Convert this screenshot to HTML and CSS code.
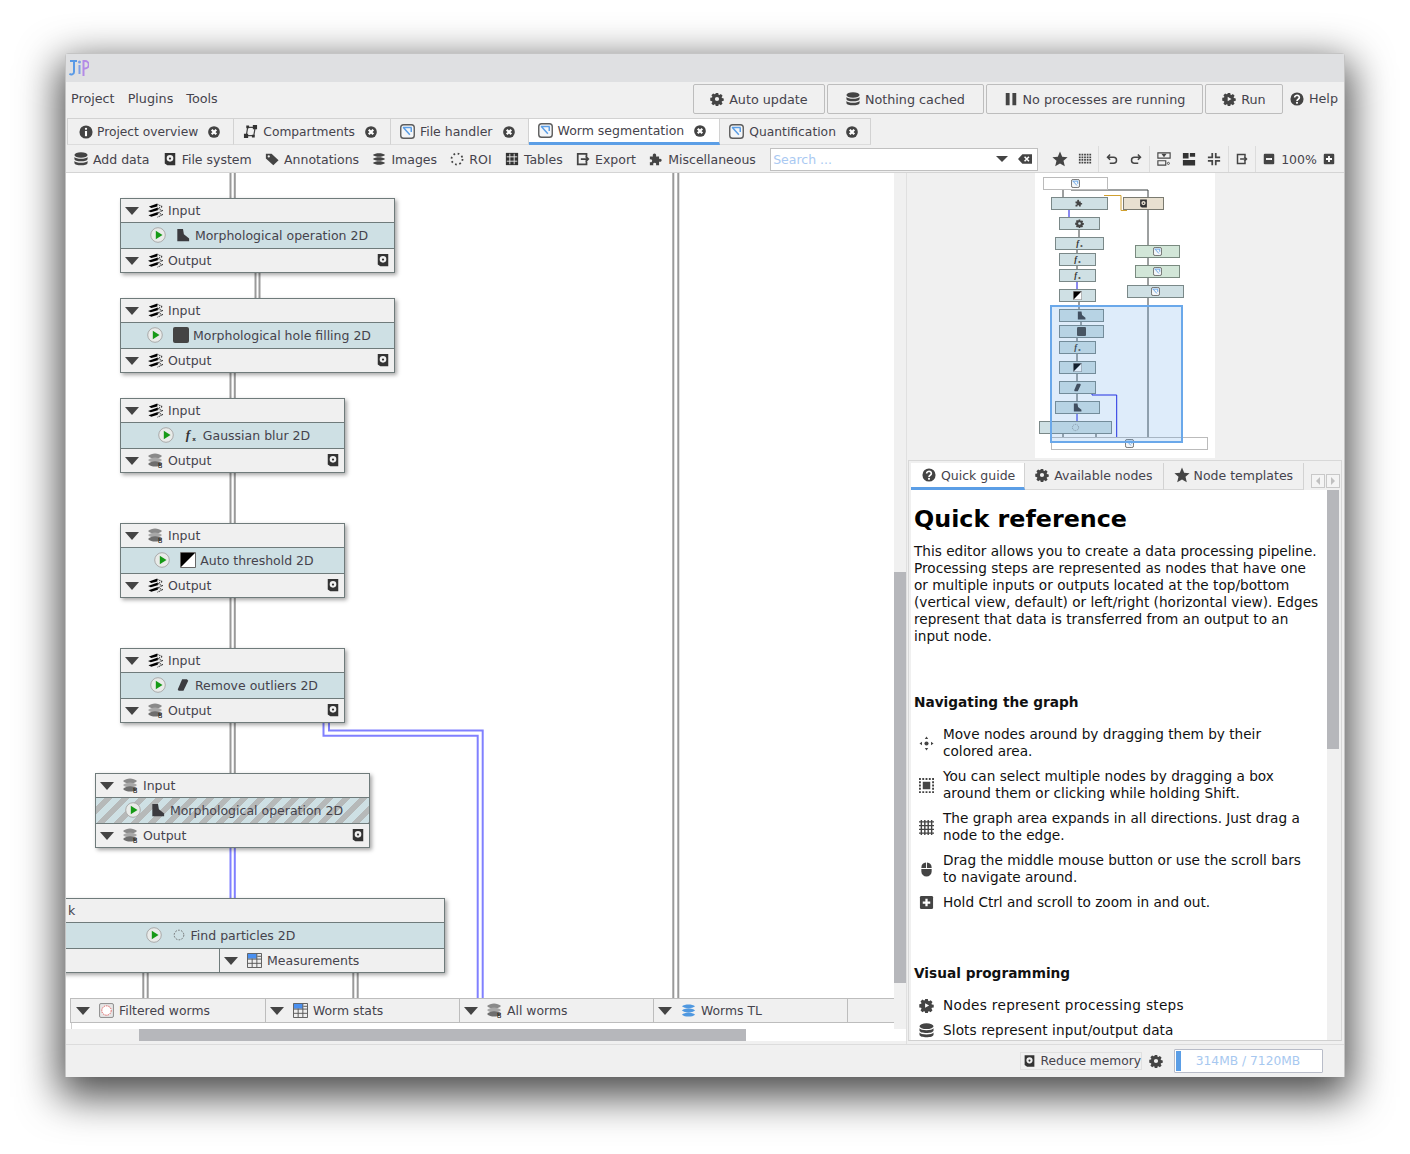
FILE: index.html
```html
<!DOCTYPE html>
<html lang="en">
<head>
  <meta charset="UTF-8">
  <title>JIP</title>
  <link rel="stylesheet" href="styles.css">
</head>
<body>
<svg class="defs" xmlns="http://www.w3.org/2000/svg">
  <symbol id="gear" viewBox="0 0 16 16"><path fill="#444" fill-rule="evenodd" d="M6.6 1h2.8l.4 2 .9.4 1.7-1.1 2 2-1.1 1.7.4.9 2 .4v2.8l-2 .4-.4.9 1.1 1.7-2 2-1.7-1.1-.9.4-.4 2H6.6l-.4-2-.9-.4-1.7 1.1-2-2 1.1-1.7-.4-.9-2-.4V6.6l2-.4.4-.9L1.6 3.6l2-2 1.7 1.1.9-.4zM8 5.6a2.4 2.4 0 1 0 0 4.8 2.4 2.4 0 0 0 0-4.8z"/></symbol>
  <symbol id="run" viewBox="0 0 16 16"><path fill="#444" fill-rule="evenodd" d="M6.6 1h2.8l.4 2 .9.4 1.7-1.1 2 2-1.1 1.7.4.9 2 .4v2.8l-2 .4-.4.9 1.1 1.7-2 2-1.7-1.1-.9.4-.4 2H6.6l-.4-2-.9-.4-1.7 1.1-2-2 1.1-1.7-.4-.9-2-.4V6.6l2-.4.4-.9L1.6 3.6l2-2 1.7 1.1.9-.4zM6.5 5.5v5L10.8 8z"/></symbol>
  <symbol id="db" viewBox="0 0 16 16"><g fill="#444"><ellipse cx="8" cy="3.4" rx="7.5" ry="3.1"/><path d="M.5 5.600c1.200 2.700 13.800 2.700 15 0v2.300c0 3.600-15 3.600-15 0z"/><path d="M.5 10.200c1.200 2.700 13.800 2.700 15 0v2.300c0 3.600-15 3.600-15 0z"/></g></symbol>
  <symbol id="pause" viewBox="0 0 16 16"><path fill="#444" d="M2 1h4.4v14H2zM9.6 1H14v14H9.6z"/></symbol>
  <symbol id="help" viewBox="0 0 16 16"><circle cx="8" cy="8" r="7.5" fill="#444"/><path fill="none" stroke="#fff" stroke-width="1.9" d="M5.3 6.2a2.7 2.4 0 1 1 4.2 2c-1 .7-1.5 1-1.5 2"/><circle cx="8" cy="12.4" r="1.2" fill="#fff"/></symbol>
  <symbol id="info" viewBox="0 0 16 16"><circle cx="8" cy="8" r="7.5" fill="#444"/><circle cx="8" cy="4.4" r="1.3" fill="#fff"/><path fill="#fff" d="M6.8 6.8h2.4v6H6.8z"/></symbol>
  <symbol id="close" viewBox="0 0 16 16"><circle cx="8" cy="8" r="7.8" fill="#444"/><path stroke="#fff" stroke-width="3" d="M5 5l6 6M11 5l-6 6"/></symbol>
  <symbol id="comp" viewBox="0 0 16 16"><path fill="none" stroke="#444" stroke-width="1.3" d="M3.5 12.5l1.5-9h8l-1.5 9z"/><path fill="#333" d="M1 10.500h4.500V15H1zM10.500 1H15v4.500h-4.500zM3.500 1.500h3v3h-3zM9.500 11.500h3v3h-3z"/></symbol>
  <symbol id="graph" viewBox="0 0 16 16"><rect x=".8" y=".8" width="14.4" height="14.4" rx="3" fill="#f4f6f8" stroke="#5c5c5c" stroke-width="1.500"/><path fill="none" stroke="#5b9ee6" stroke-width="1.600" d="M3 3.800h9.500M3.800 4l6.700 7.500M12 4v4.500"/></symbol>
  <symbol id="hdd" viewBox="0 0 16 16"><path fill="#333" fill-rule="evenodd" d="M2 1h12v14H5l-3-2zM8 3.400a3.800 3.800 0 1 0 0 7.600 3.800 3.800 0 0 0 0-7.600zM8 6.200a1.300 1.300 0 1 1 0 2.600 1.300 1.300 0 0 1 0-2.600z"/></symbol>
  <symbol id="tag" viewBox="0 0 16 16"><path fill="#444" fill-rule="evenodd" d="M1 2h6.500l8 7.500L9.500 15 1 7.500zM4.300 3.700a1.300 1.300 0 1 0 0 2.600 1.300 1.300 0 0 0 0-2.600z"/></symbol>
  <symbol id="layers" viewBox="0 0 16 16"><path fill="#444" d="M1 3.500C4 .8 12 .8 15 3.500 12 6.200 4 6.200 1 3.500zM1 8c3-2.700 11-2.700 14 0-3 2.700-11 2.700-14 0zM1 12.500c3-2.700 11-2.700 14 0-3 2.700-11 2.700-14 0z"/></symbol>
  <symbol id="layers-blue" viewBox="0 0 16 16"><path fill="#4f98e0" d="M1 3.500C4 .8 12 .8 15 3.500 12 6.200 4 6.200 1 3.500zM1 8c3-2.700 11-2.700 14 0-3 2.700-11 2.700-14 0zM1 12.500c3-2.700 11-2.700 14 0-3 2.700-11 2.700-14 0z"/></symbol>
  <symbol id="roi" viewBox="0 0 16 16"><circle cx="8" cy="8" r="6.300" fill="none" stroke="#444" stroke-width="2" stroke-dasharray="2 2.950"/></symbol>
  <symbol id="table" viewBox="0 0 16 16"><path fill="#333" d="M1 1h14v14H1z"/><path stroke="#f0f0f0" stroke-width="1" d="M5.500 2v12M10.500 2v12M2 5.500h12M2 10.500h12"/></symbol>
  <symbol id="export" viewBox="0 0 16 16"><path fill="none" stroke="#444" stroke-width="2" d="M12 5V2H2v12h10v-3M5.500 8H14M11 5l3 3-3 3"/></symbol>
  <symbol id="puzzle" viewBox="0 0 16 16"><path fill="#444" d="M1 5h3.500c-1.500-4.500 5-4.500 3.500 0h3.500v3c4-1.500 4 4.500 0 3v4H8c1.500-3.500-4.500-3.500-3 0H1v-3.500c3.500 1.500 3.500-4.500 0-3z"/></symbol>
  <symbol id="backspace" viewBox="0 0 16 16"><path fill="#444" d="M5 2.500h11v11H5L0 8z"/><path stroke="#fff" stroke-width="1.800" d="M7.500 5.500l5 5M12.500 5.500l-5 5"/></symbol>
  <symbol id="star" viewBox="0 0 16 16"><path fill="#444" d="M8 .6l2.200 5.100 5.400.5-4.100 3.600 1.300 5.400L8 12.400l-4.800 2.800 1.300-5.400L.4 6.200l5.400-.5z"/></symbol>
  <symbol id="dots" viewBox="0 0 16 16"><path stroke="#444" stroke-width="2" stroke-dasharray="2 1" d="M1 3h14M1 6h14M1 9h14M1 12h14"/></symbol>
  <symbol id="undo" viewBox="0 0 16 16"><path fill="none" stroke="#444" stroke-width="2" d="M5.500 2L2 5.500 5.500 9M2.500 5.500h7.500a4 4 0 0 1 0 8H5"/></symbol>
  <symbol id="redo" viewBox="0 0 16 16"><path fill="none" stroke="#444" stroke-width="2" d="M10.500 2L14 5.500 10.500 9M13.500 5.500H6a4 4 0 0 0 0 8h5"/></symbol>
  <symbol id="align" viewBox="0 0 16 16"><path fill="none" stroke="#444" stroke-width="1.300" d="M1 1h14v6H1zM1 10h9v5H1z"/><path fill="#444" d="M5 2h6L8 6z"/><circle cx="13" cy="13" r="1.200" fill="none" stroke="#444"/></symbol>
  <symbol id="layout" viewBox="0 0 16 16"><path fill="#333" d="M1 1h6.500v6.500H1zM9 1h6v4.500H9zM1 9h14v6.500H1z"/></symbol>
  <symbol id="shrink" viewBox="0 0 16 16"><path fill="none" stroke="#444" stroke-width="2" d="M6 1v5H1M10 1v5h5M6 15v-5H1M10 15v-5h5"/></symbol>
  <symbol id="minus" viewBox="0 0 16 16"><rect x="1" y="1" width="14" height="14" rx="1.500" fill="#444"/><path fill="#fff" d="M4 6.800h8v2.400H4z"/></symbol>
  <symbol id="plus" viewBox="0 0 16 16"><rect x="1" y="1" width="14" height="14" rx="1.500" fill="#444"/><path fill="#fff" d="M4 6.800h2.800V4h2.400v2.800H12v2.400H9.200V12H6.800V9.200H4z"/></symbol>
  <symbol id="stack-bw" viewBox="0 0 16 16"><path fill="#000" d="M1 3.800L10 .6v3L3.500 5.400zM0 8.400L10.500 4.800v3L3 9.900zM.5 13l10-3.400v3L3.500 14.600z"/><path fill="none" stroke="#333" stroke-width="1.200" stroke-dasharray="1.200 1" d="M10 1.500l5.500 2.300L10.500 6M10.500 6l5 2.200-5 2.300M10.500 10.500l5 2-5.500 2.700"/></symbol>
  <symbol id="stack-8" viewBox="0 0 16 16"><path fill="#8a8a8a" d="M0 3.300C4-.4 11-.4 15 3.300 11 7 4 7 0 3.300z"/><path fill="#a8a8a8" d="M0 7.500C4 3.800 11 3.800 15 7.500 11 11.200 4 11.200 0 7.500z"/><path fill="#6e6e6e" d="M0 11.700C4 8 11 8 15 11.700 11 15.400 4 15.400 0 11.700z"/><text x="10.500" y="16" class="icon-text">8</text></symbol>
  <symbol id="play" viewBox="0 0 16 16"><circle cx="8" cy="8" r="7.300" fill="#e9ebe9" stroke="#aaa"/><path fill="#169a16" d="M5.800 3.800L12.500 8l-6.700 4.200z"/></symbol>
  <symbol id="morph" viewBox="0 0 16 16"><path fill="#3b3b3f" d="M1.500 1h6.500l1 6 6 5v3H1.500z"/></symbol>
  <symbol id="hole" viewBox="0 0 16 16"><rect x="0" y="0" width="16" height="16" rx="2" fill="#444"/></symbol>
  <symbol id="fx" viewBox="0 0 16 16"><text x="2" y="13" class="icon-f">f</text><text x="9.500" y="15" class="icon-x">x</text></symbol>
  <symbol id="thresh" viewBox="0 0 16 16"><path fill="#fff" stroke="#666" d="M.5.500h15v15H.5z"/><path fill="#000" d="M1 1h14L1 15z"/></symbol>
  <symbol id="outlier" viewBox="0 0 16 16"><path fill="#3b3b3f" d="M7 1.500h5.500l1.500 1.500-5.500 11.500H3l-1-1.500z"/></symbol>
  <symbol id="particles" viewBox="0 0 16 16"><circle cx="8" cy="8" r="5.500" fill="none" stroke="#666" stroke-dasharray="2 1.450"/></symbol>
  <symbol id="table-blue" viewBox="0 0 16 16"><path fill="#eee" stroke="#555" d="M.5.500h15v15H.5z"/><path fill="#4a90f0" d="M1 1h9.500v5H1z"/><path stroke="#555" d="M5.500 6v9M10.500 1v14M11 3.500h4M1 6.500h14M1 11h14"/></symbol>
  <symbol id="roi-file" viewBox="0 0 16 16"><rect x=".6" y=".6" width="14.800" height="14.800" rx="1.500" fill="#e6e6e6" stroke="#888"/><circle cx="8" cy="8" r="5" fill="#fff" stroke="#e05050" stroke-dasharray="1.500 1"/></symbol>
  <symbol id="move" viewBox="0 0 16 16"><circle cx="8" cy="8" r="2.200" fill="#444"/><path fill="#444" d="M8 .5l1.800 2.700H6.200zM8 15.500l-1.800-2.700h3.600zM.5 8l2.700-1.800v3.600zM15.500 8l-2.700 1.800V6.200z"/></symbol>
  <symbol id="select" viewBox="0 0 16 16"><path fill="#444" d="M4 4h8v8H4z"/><path fill="none" stroke="#444" stroke-width="2" stroke-dasharray="2 1.500" d="M0 1h16M0 15h16M1 3.500v9M15 3.500v9"/></symbol>
  <symbol id="grid" viewBox="0 0 16 16"><path fill="none" stroke="#444" stroke-width="1.500" d="M0 2h16M0 6h16M0 10h16M0 14h16M2.500 0v16M6.200 0v16M9.800 0v16M13.500 0v16"/></symbol>
  <symbol id="mouse" viewBox="0 0 16 16"><path fill="#444" d="M2.500 7.500h11V10a5.500 5.500 0 0 1-11 0zM2.500 6.500V6A5.500 5.500 0 0 1 7.500.600v5.900zM8.500.600A5.500 5.500 0 0 1 13.500 6v.5h-5z"/></symbol>
</svg>

<div class="window">
  <div class="titlebar">
    <svg class="logo" viewBox="0 0 20 18">
      <path fill="none" stroke="#5a9ae6" stroke-width="2" d="M1 2h7M5 2v11a2.500 2.500 0 0 1-4.500 1.500"/>
      <path fill="none" stroke="#7fa0e6" stroke-width="2" d="M10.500 6v9"/>
      <circle cx="10.500" cy="3" r="1.500" fill="#7fa0e6"/>
      <path fill="none" stroke="#b48ae6" stroke-width="2" d="M14.500 17V2h1.500a3.500 3.500 0 0 1 0 7.500h-1.500"/>
    </svg>
  </div>

  <div class="menubar">
    <a class="menu">Project</a>
    <a class="menu">Plugins</a>
    <a class="menu">Tools</a>
    <div class="actions">
      <button class="btn b1"><svg class="ic"><use href="#gear"/></svg>Auto update</button>
      <button class="btn b2"><svg class="ic"><use href="#db"/></svg>Nothing cached</button>
      <button class="btn b3"><svg class="ic"><use href="#pause"/></svg>No processes are running</button>
      <button class="btn b4"><svg class="ic"><use href="#run"/></svg>Run</button>
    </div>
    <a class="help-link"><svg class="ic"><use href="#help"/></svg>Help</a>
  </div>

  <div class="tabs">
    <div class="tab"><svg class="ic"><use href="#info"/></svg>Project overview<svg class="x"><use href="#close"/></svg></div>
    <div class="tab"><svg class="ic"><use href="#comp"/></svg>Compartments<svg class="x"><use href="#close"/></svg></div>
    <div class="tab"><svg class="ic"><use href="#graph"/></svg>File handler<svg class="x"><use href="#close"/></svg></div>
    <div class="tab active"><svg class="ic"><use href="#graph"/></svg>Worm segmentation<svg class="x"><use href="#close"/></svg></div>
    <div class="tab last"><svg class="ic"><use href="#graph"/></svg>Quantification<svg class="x"><use href="#close"/></svg></div>
  </div>

  <div class="toolbar">
    <div class="tool"><svg class="ic"><use href="#db"/></svg>Add data</div>
    <div class="tool"><svg class="ic"><use href="#hdd"/></svg>File system</div>
    <div class="tool"><svg class="ic"><use href="#tag"/></svg>Annotations</div>
    <div class="tool"><svg class="ic"><use href="#layers"/></svg>Images</div>
    <div class="tool"><svg class="ic"><use href="#roi"/></svg>ROI</div>
    <div class="tool"><svg class="ic"><use href="#table"/></svg>Tables</div>
    <div class="tool"><svg class="ic"><use href="#export"/></svg>Export</div>
    <div class="tool"><svg class="ic"><use href="#puzzle"/></svg>Miscellaneous</div>
    <div class="search">
      <span class="placeholder">Search ...</span>
      <span class="tri small"></span>
      <svg class="ic"><use href="#backspace"/></svg>
    </div>
    <div class="group g1"><svg class="ic star"><use href="#star"/></svg><svg class="ic"><use href="#dots"/></svg></div>
    <div class="group g2"><svg class="ic"><use href="#undo"/></svg><svg class="ic"><use href="#redo"/></svg></div>
    <div class="group g3"><svg class="ic"><use href="#align"/></svg><svg class="ic"><use href="#layout"/></svg><svg class="ic"><use href="#shrink"/></svg></div>
    <div class="group g4"><svg class="ic"><use href="#export"/></svg></div>
    <div class="group g5"><svg class="ic"><use href="#minus"/></svg><span>100%</span><svg class="ic"><use href="#plus"/></svg></div>
  </div>

  <div class="main">
    <div class="graph">
      <div class="canvas">
        <svg class="edges" viewBox="0 0 828 856">
          <g class="edge-gray">
            <path d="M164.500 0v25M168.800 0v25"/>
            <path d="M189.500 100v25M193.500 100v25"/>
            <path d="M164.500 200v25M168.800 200v25"/>
            <path d="M164.500 300v50M168.800 300v50"/>
            <path d="M164.500 425v50M168.800 425v50"/>
            <path d="M164.500 550v50M168.800 550v50"/>
            <path d="M77.300 800v25M81.700 800v25"/>
            <path d="M287.300 800v25M291.700 800v25"/>
            <path d="M607.300 0v825M612.300 0v825"/>
          </g>
          <g class="edge-blue">
            <path d="M164.500 675v50M168.800 675v50"/>
            <path d="M263 550v7.500h153.700V825"/>
            <path d="M257.500 550v12.700h154.200V825"/>
          </g>
        </svg>

        <div class="node n1">
          <div class="row"><span class="tri"></span><svg class="ic slot"><use href="#stack-bw"/></svg>Input</div>
          <div class="row mid"><svg class="ic play"><use href="#play"/></svg><svg class="ic"><use href="#morph"/></svg>Morphological operation 2D</div>
          <div class="row"><span class="tri"></span><svg class="ic slot"><use href="#stack-bw"/></svg>Output<svg class="disk"><use href="#hdd"/></svg></div>
        </div>
        <div class="node n2">
          <div class="row"><span class="tri"></span><svg class="ic slot"><use href="#stack-bw"/></svg>Input</div>
          <div class="row mid"><svg class="ic play"><use href="#play"/></svg><svg class="ic big"><use href="#hole"/></svg>Morphological hole filling 2D</div>
          <div class="row"><span class="tri"></span><svg class="ic slot"><use href="#stack-bw"/></svg>Output<svg class="disk"><use href="#hdd"/></svg></div>
        </div>
        <div class="node n3">
          <div class="row"><span class="tri"></span><svg class="ic slot"><use href="#stack-bw"/></svg>Input</div>
          <div class="row mid"><svg class="ic play"><use href="#play"/></svg><svg class="ic"><use href="#fx"/></svg>Gaussian blur 2D</div>
          <div class="row"><span class="tri"></span><svg class="ic slot"><use href="#stack-8"/></svg>Output<svg class="disk"><use href="#hdd"/></svg></div>
        </div>
        <div class="node n4">
          <div class="row"><span class="tri"></span><svg class="ic slot"><use href="#stack-8"/></svg>Input</div>
          <div class="row mid"><svg class="ic play"><use href="#play"/></svg><svg class="ic big"><use href="#thresh"/></svg>Auto threshold 2D</div>
          <div class="row"><span class="tri"></span><svg class="ic slot"><use href="#stack-bw"/></svg>Output<svg class="disk"><use href="#hdd"/></svg></div>
        </div>
        <div class="node n5">
          <div class="row"><span class="tri"></span><svg class="ic slot"><use href="#stack-bw"/></svg>Input</div>
          <div class="row mid"><svg class="ic play"><use href="#play"/></svg><svg class="ic"><use href="#outlier"/></svg>Remove outliers 2D</div>
          <div class="row"><span class="tri"></span><svg class="ic slot"><use href="#stack-8"/></svg>Output<svg class="disk"><use href="#hdd"/></svg></div>
        </div>
        <div class="node n6">
          <div class="row"><span class="tri"></span><svg class="ic slot"><use href="#stack-8"/></svg>Input</div>
          <div class="row mid striped"><svg class="ic play"><use href="#play"/></svg><svg class="ic"><use href="#morph"/></svg>Morphological operation 2D</div>
          <div class="row"><span class="tri"></span><svg class="ic slot"><use href="#stack-8"/></svg>Output<svg class="disk"><use href="#hdd"/></svg></div>
        </div>
        <div class="node n7">
          <div class="row clipped">k</div>
          <div class="row mid"><svg class="ic play"><use href="#play"/></svg><svg class="ic"><use href="#particles"/></svg>Find particles 2D</div>
          <div class="row end"><div class="out-slot"><span class="tri"></span><svg class="ic slot"><use href="#table-blue"/></svg>Measurements</div></div>
        </div>

        <div class="slots">
          <div class="cell"><span class="tri"></span><svg class="ic slot"><use href="#roi-file"/></svg>Filtered worms</div>
          <div class="cell"><span class="tri"></span><svg class="ic slot"><use href="#table-blue"/></svg>Worm stats</div>
          <div class="cell"><span class="tri"></span><svg class="ic slot"><use href="#stack-8"/></svg>All worms</div>
          <div class="cell"><span class="tri"></span><svg class="ic slot"><use href="#layers-blue"/></svg>Worms TL</div>
        </div>
      </div>
      <div class="vscroll"><div class="vthumb"></div></div>
      <div class="hscroll"><div class="hthumb"></div></div>
    </div>

    <div class="side">
      <div class="minimap">
        <svg class="map" viewBox="1035 173 180 285">
          <g class="mm-line">
            <path d="M1063 189v8M1071 190h77v7M1079 229v8M1077 249v4M1077 265v4M1079 301v8M1081 321v4M1077 337v4M1077 353v8M1077 373v8M1077 393v8M1148 209v36M1148 257v8M1148 277v8M1148 297v140M1063 433v4M1096 433v4"/>
          </g>
          <path class="mm-orange" d="M1104 195.500h17v15h6"/>
          <path class="mm-blue" d="M1069 209v8M1077 281v8M1077 413v8M1092 393v2h24.700v42"/>
          <rect class="mm-io" x="1043.500" y="177.500" width="64" height="12"/>
          <rect class="mm-node" x="1051.500" y="197.500" width="56" height="12"/>
          <rect class="mm-node" x="1059.500" y="217.500" width="40" height="12"/>
          <rect class="mm-node" x="1055.500" y="237.500" width="48" height="12"/>
          <rect class="mm-node" x="1059.500" y="253.500" width="36" height="12"/>
          <rect class="mm-node" x="1059.500" y="269.500" width="36" height="12"/>
          <rect class="mm-node" x="1059.500" y="289.500" width="36" height="12"/>
          <rect class="mm-node" x="1059.500" y="309.500" width="44" height="12"/>
          <rect class="mm-node" x="1059.500" y="325.500" width="44" height="12"/>
          <rect class="mm-node" x="1059.500" y="341.500" width="36" height="12"/>
          <rect class="mm-node" x="1059.500" y="361.500" width="36" height="12"/>
          <rect class="mm-node" x="1059.500" y="381.500" width="36" height="12"/>
          <rect class="mm-node" x="1055.500" y="401.500" width="44" height="12"/>
          <rect class="mm-node" x="1039.500" y="421.500" width="72" height="12"/>
          <rect class="mm-tan" x="1123.500" y="197.500" width="40" height="12"/>
          <rect class="mm-green" x="1135.500" y="245.500" width="44" height="12"/>
          <rect class="mm-green" x="1135.500" y="265.500" width="44" height="12"/>
          <rect class="mm-node" x="1127.500" y="285.500" width="56" height="12"/>
          <rect class="mm-io" x="1051.500" y="437.500" width="156" height="12"/>
          <use href="#graph" x="1071" y="179" width="9" height="9"/>
          <use href="#graph" x="1125" y="439" width="9" height="9"/>
          <use href="#puzzle" x="1075" y="199" width="8" height="8"/>
          <use href="#gear" x="1075" y="219" width="9" height="9"/>
          <use href="#fx" x="1075" y="239" width="9" height="9"/>
          <use href="#fx" x="1073" y="255" width="9" height="9"/>
          <use href="#fx" x="1073" y="271" width="9" height="9"/>
          <use href="#thresh" x="1073" y="291" width="9" height="9"/>
          <use href="#morph" x="1077" y="311" width="9" height="9"/>
          <use href="#hole" x="1077" y="327" width="9" height="9"/>
          <use href="#fx" x="1073" y="343" width="9" height="9"/>
          <use href="#thresh" x="1073" y="363" width="9" height="9"/>
          <use href="#outlier" x="1073" y="383" width="9" height="9"/>
          <use href="#morph" x="1073" y="403" width="9" height="9"/>
          <use href="#particles" x="1071" y="423" width="9" height="9"/>
          <use href="#hdd" x="1139" y="199" width="9" height="9"/>
          <use href="#graph" x="1153" y="247" width="9" height="9"/>
          <use href="#graph" x="1153" y="267" width="9" height="9"/>
          <use href="#graph" x="1151" y="287" width="9" height="9"/>
          <rect class="mm-sel" x="1051" y="306" width="131" height="136"/>
        </svg>
      </div>

      <div class="doc">
        <div class="doc-tabs">
          <div class="doc-tab active"><svg class="ic"><use href="#help"/></svg>Quick guide</div>
          <div class="doc-tab"><svg class="ic"><use href="#gear"/></svg>Available nodes</div>
          <div class="doc-tab"><svg class="ic star"><use href="#star"/></svg>Node templates</div>
          <div class="doc-nav"><span class="nav-btn"><i class="arrow left"></i></span><span class="nav-btn"><i class="arrow right"></i></span></div>
        </div>
        <div class="doc-body">
          <div class="doc-text">
            <h1>Quick reference</h1>
            <p>This editor allows you to create a data processing pipeline. Processing steps are represented as nodes that have one or multiple inputs or outputs located at the top/bottom (vertical view, default) or left/right (horizontal view). Edges represent that data is transferred from an output to an input node.</p>
            <h2>Navigating the graph</h2>
            <ul>
              <li><svg class="ic"><use href="#move"/></svg><span>Move nodes around by dragging them by their colored area.</span></li>
              <li><svg class="ic"><use href="#select"/></svg><span>You can select multiple nodes by dragging a box around them or clicking while holding Shift.</span></li>
              <li><svg class="ic"><use href="#grid"/></svg><span>The graph area expands in all directions. Just drag a node to the edge.</span></li>
              <li><svg class="ic"><use href="#mouse"/></svg><span>Drag the middle mouse button or use the scroll bars to navigate around.</span></li>
              <li><svg class="ic"><use href="#plus"/></svg><span>Hold Ctrl and scroll to zoom in and out.</span></li>
            </ul>
            <h2 class="second">Visual programming</h2>
            <ul>
              <li><svg class="ic"><use href="#run"/></svg><span class="wide">Nodes represent processing steps</span></li>
              <li><svg class="ic"><use href="#db"/></svg><span class="wider">Slots represent input/output data</span></li>
            </ul>
          </div>
          <div class="doc-scroll"><div class="doc-thumb"></div></div>
        </div>
      </div>
    </div>
  </div>

  <div class="status">
    <div class="reduce"><svg class="ic"><use href="#hdd"/></svg>Reduce memory</div>
    <svg class="ic"><use href="#gear"/></svg>
    <div class="memory"><span class="mem-fill"></span><span class="mem-label">314MB / 7120MB</span></div>
  </div>
</div>
</body>
</html>
```
FILE: styles.css
```css
html, body {
  margin: 0;
  height: 100%;
}
body {
  box-sizing: border-box;
  height: 1154px;
  padding: 53px 65px 77px;
  background: #fff;
  font-family: "DejaVu Sans", sans-serif;
  font-size: 12.5px;
  color: #45434c;
  white-space: nowrap;
  overflow: hidden;
}
.defs {
  display: none;
}
.icon-text {
  font: 8px "DejaVu Sans", sans-serif;
  fill: #111;
}
.icon-f {
  font: italic bold 15px "Liberation Serif", serif;
  fill: #333;
}
.icon-x {
  font: bold 6.5px "DejaVu Sans", sans-serif;
  fill: #333;
}
.window {
  display: flex;
  flex-direction: column;
  box-sizing: border-box;
  height: 1024px;
  background: #f0f0f0;
  border: 1px solid #c4c4c4;
  border-bottom: none;
  border-radius: 4px 4px 0 0;
  box-shadow: 0 14px 40px 6px rgba(0, 0, 0, 0.7);
}
.ic {
  flex: none;
  width: 14px;
  height: 14px;
}
.tri {
  flex: none;
  width: 0;
  height: 0;
  border-left: 7px solid transparent;
  border-right: 7px solid transparent;
  border-top: 8px solid #444;
}
.tri.small {
  border-left-width: 6px;
  border-right-width: 6px;
  border-top-width: 6px;
}

/* top of the window */
.titlebar {
  flex: none;
  height: 28px;
  display: flex;
  align-items: center;
  padding-left: 3px;
  background: #dfe0e2;
}
.logo {
  width: 20px;
  height: 18px;
}
.menubar {
  flex: none;
  height: 36px;
  display: flex;
  align-items: center;
  padding: 0 6px 3px 5px;
  box-sizing: border-box;
  font-size: 12.75px;
}
.menu {
  margin-right: 13px;
}
.actions {
  display: flex;
  gap: 2px;
  margin-left: auto;
}
.btn {
  display: flex;
  align-items: center;
  justify-content: center;
  gap: 5px;
  box-sizing: border-box;
  height: 30px;
  padding: 1px 0 0;
  background: #f0f0f0;
  border: 1px solid #bdbdbd;
  border-radius: 2px;
  font: inherit;
  color: inherit;
}
.b1 { width: 132px; }
.b2 { width: 157px; }
.b3 { width: 217px; }
.b4 { width: 78px; }
.help-link {
  display: flex;
  align-items: center;
  gap: 5px;
  margin-left: 7px;
}
.tabs {
  flex: none;
  height: 27px;
  display: flex;
  padding-left: 1px;
  font-size: 12.25px;
}
.tab {
  display: flex;
  align-items: center;
  box-sizing: border-box;
  height: 27px;
  padding: 0 13px 0 9px;
  border: 1px solid #d2d2d2;
  border-left: none;
  border-bottom-color: #dcdcdc;
}
.tab:nth-child(n+3) {
  font-size: 12.5px;
}
.tab.last {
  font-size: 12.3px;
  padding-right: 12px;
}
.tab:first-child {
  padding-left: 11px;
  border-left: 1px solid #d2d2d2;
}
.tab .ic {
  width: 15px;
  height: 15px;
  margin-right: 5px;
}
.tab:first-child .ic {
  width: 14px;
  height: 14px;
  margin-right: 4px;
}
.tab .x {
  flex: none;
  width: 12px;
  height: 12px;
  margin-left: 10px;
}
.tab.active {
  background: #fff;
  border-bottom: 3px solid #5b9ee6;
}
.toolbar {
  flex: none;
  height: 28px;
  display: flex;
  align-items: center;
  box-sizing: border-box;
  padding: 1px 0 0 8px;
  gap: 13.3px;
  border-bottom: 1px solid #d4d4d4;
}
.tool {
  display: flex;
  align-items: center;
  gap: 5px;
}
.search {
  flex: none;
  display: flex;
  align-items: center;
  box-sizing: border-box;
  width: 268px;
  height: 23px;
  margin-left: 1px;
  padding: 0 4px 0 2px;
  background: #fff;
  border: 1px solid #c0c0c0;
}
.placeholder {
  flex: 1;
  color: #a9c9f2;
}
.search .tri {
  margin-right: 9px;
}
.search .ic {
  width: 16px;
}
.group {
  display: flex;
  align-items: center;
  height: 100%;
  padding: 0 7px;
  border-right: 1px solid #dcdcdc;
}
.g1 {
  gap: 10px;
  margin-left: -6.3px;
  padding-right: 6px;
}
.g1 .star {
  width: 16px;
  height: 16px;
}
.g2 { gap: 12px; margin-left: -13.3px; }
.g3 { gap: 11px; margin-left: -13.3px; }
.g4 { margin-left: -13.3px; }
.g5 { gap: 6px; margin-left: -13.3px; border-right: none; }
.g2 .ic, .g4 .ic, .g5 .ic { width: 12px; height: 12px; }

/* graph area */
.main {
  flex: 1;
  min-height: 0;
  display: flex;
}
.graph {
  flex: none;
  width: 840px;
  display: grid;
  grid-template-columns: 828px 12px;
  grid-template-rows: 856px 14px;
}
.canvas {
  position: relative;
  overflow: hidden;
  background: #fff;
}
.edges {
  position: absolute;
  left: 0;
  top: 0;
  width: 828px;
  height: 856px;
  fill: none;
  stroke-width: 2;
}
.edge-gray { stroke: #9a9a9a; }
.edge-blue { stroke: #8080ff; }
.node {
  position: absolute;
  display: flex;
  flex-direction: column;
  box-sizing: border-box;
  height: 75px;
  background: #f0f0f0;
  border: 1px solid #6f7b7b;
  box-shadow: 2px 2px 4px rgba(0, 0, 0, 0.35);
}
.n1 { left: 54px; top: 25px; width: 275px; }
.n2 { left: 54px; top: 125px; width: 275px; }
.n3 { left: 54px; top: 225px; width: 225px; }
.n4 { left: 54px; top: 350px; width: 225px; }
.n5 { left: 54px; top: 475px; width: 225px; }
.n6 { left: 29px; top: 600px; width: 275px; }
.n7 { left: -67px; top: 725px; width: 446px; }
.row {
  flex: none;
  height: 23px;
  display: flex;
  align-items: center;
  padding: 0 4px 0 4px;
}
.row.mid {
  box-sizing: border-box;
  height: 27px;
  justify-content: center;
  padding: 0 0 1px 3px;
  background: #cee0e4;
  border-top: 1px solid #6f7b7b;
  border-bottom: 1px solid #6f7b7b;
}
.n7 .row.mid {
  padding: 0 3px 1px 0;
}
.row.striped {
  background: repeating-linear-gradient(135deg, #cee0e4 0 6px, #b6b9b9 6px 12px);
}
.row.clipped {
  padding-left: 68px;
}
.row.end {
  justify-content: flex-end;
  padding: 0;
}
.mid .ic {
  margin-right: 5px;
}
.mid .play {
  width: 16px;
  height: 16px;
  margin-right: 10px;
}
.mid .big {
  width: 16px;
  height: 16px;
  margin-right: 4px;
}
.slot {
  width: 15px;
  height: 15px;
  margin: 0 5px 0 9px;
}
.disk {
  width: 14px;
  height: 14px;
  margin: -1px 0 0 auto;
}
.out-slot {
  display: flex;
  align-items: center;
  box-sizing: border-box;
  width: 225px;
  height: 100%;
  padding-left: 4px;
  border-left: 1px solid #6f7b7b;
}
.slots {
  position: absolute;
  left: 4px;
  right: 0;
  top: 825px;
  display: flex;
  box-sizing: border-box;
  height: 25px;
  background: #f0f0f0;
  border-top: 1px solid #bdbdbd;
  border-bottom: 1px solid #bdbdbd;
  font-size: 12.4px;
}
.slots::after {
  content: "";
  position: absolute;
  left: 1px;
  top: 24px;
  width: 1px;
  height: 7px;
  background: #d0d0d0;
}
.cell {
  display: flex;
  align-items: center;
  box-sizing: border-box;
  width: 194px;
  padding-left: 4px;
  border-right: 1px solid #bdbdbd;
}
.cell:first-child {
  width: 196px;
  padding-left: 5px;
  border-left: 1px solid #bdbdbd;
}
.vscroll {
  background: #f0f0f0;
  padding-top: 399px;
}
.vthumb {
  height: 411px;
  background: #b6b7bb;
}
.hscroll {
  grid-column: 1 / 3;
  height: 12px;
  background: linear-gradient(to right, #f0f0f0 73px, #fff 73px);
  padding-left: 73px;
}
.hthumb {
  width: 607px;
  height: 100%;
  background: #b6b7bb;
}

/* right side */
.side {
  flex: none;
  width: 438px;
  display: flex;
  flex-direction: column;
  padding-left: 1px;
  box-sizing: border-box;
  border-left: 1px solid #e0e0e0;
}
.minimap {
  flex: none;
  height: 285px;
  padding-left: 127px;
}
.map {
  display: block;
  width: 180px;
  height: 285px;
  background: #fff;
}
.mm-line { fill: none; stroke: #3a4040; stroke-width: 1; }
.mm-orange { fill: none; stroke: #d0a030; stroke-width: 1; }
.mm-blue { fill: none; stroke: #1414e0; stroke-width: 1; }
.mm-io { fill: #fff; stroke: #bbb; }
.mm-node { fill: #cfe0e4; stroke: #7a8888; }
.mm-tan { fill: #e8e0d0; stroke: #7a7a70; }
.mm-green { fill: #d2e6d8; stroke: #7a8a80; }
.mm-sel { fill: rgba(90, 158, 230, 0.2); stroke: #6aa8ea; stroke-width: 2; }
.doc {
  flex: 1;
  min-height: 0;
  display: flex;
  flex-direction: column;
  margin: 2px 2px 3px 0;
  padding: 2px 2px 0;
  border-top: 1px solid #d8d8d8;
  border-left: 1px solid #d8d8d8;
  border-right: 1px solid #d8d8d8;
  border-bottom: 1px solid #d0d0d0;
}
.doc-tabs {
  flex: none;
  height: 27px;
  display: flex;
}
.doc-tab {
  display: flex;
  align-items: center;
  gap: 5px;
  box-sizing: border-box;
  padding: 0 10px 2px;
  border-right: 1px solid #d2d2d2;
  border-bottom: 1px solid #d8d8d8;
}
.doc-tab .star {
  width: 16px;
  height: 16px;
  margin-left: 0;
  margin-right: -1px;
}
.doc-tab.active {
  padding: 0 9px 0 11px;
  background: #fff;
  border-bottom: 3px solid #5b9ee6;
}
.doc-nav {
  display: flex;
  gap: 1px;
  margin: 11px 0 0 7px;
}
.nav-btn {
  display: flex;
  align-items: center;
  justify-content: center;
  box-sizing: border-box;
  width: 14px;
  height: 14px;
  background: #f4f4f4;
  border: 1px solid #c8c8c8;
}
.arrow {
  width: 0;
  height: 0;
  border-top: 4px solid transparent;
  border-bottom: 4px solid transparent;
}
.arrow.left { border-right: 4px solid #c0c0c0; }
.arrow.right { border-left: 4px solid #c0c0c0; }
.doc-body {
  flex: 1;
  min-height: 0;
  display: flex;
  overflow: hidden;
  background: #fff;
}
.doc-text {
  flex: none;
  box-sizing: border-box;
  width: 416px;
  padding-left: 3px;
  font-size: 13.65px;
  line-height: 17px;
  color: #111;
  white-space: normal;
}
.doc-text h1 {
  margin: 13px 0 8px;
  font-size: 23.8px;
  line-height: 32px;
  color: #000;
}
.doc-text p {
  max-width: 406px;
  margin: 0;
}
.doc-text h2 {
  margin: 48px 0 15px;
  font-size: 13.7px;
  line-height: 18px;
  color: #111;
}
.doc-text h2.second {
  margin-top: 53px;
}
.doc-text ul {
  list-style: none;
  margin: 0;
  padding: 0;
}
.doc-text li {
  display: flex;
  align-items: center;
  gap: 9px;
  margin-bottom: 8px;
  padding-left: 5px;
}
.doc-text li span {
  max-width: 365px;
}
.doc-text li .wide {
  letter-spacing: 0.3px;
}
.doc-text li .wider {
  letter-spacing: 0.1px;
}
.doc-text li .ic {
  width: 15px;
  height: 15px;
}
.doc-scroll {
  flex: none;
  width: 12px;
  background: #f0f0f0;
}
.doc-thumb {
  height: 259px;
  background: #b6b7bb;
}

/* bottom bar */
.status {
  flex: none;
  height: 33px;
  display: flex;
  align-items: center;
  justify-content: flex-end;
  gap: 7px;
  box-sizing: border-box;
  padding: 0 21px 1px 0;
  border-top: 1px solid #dcdcdc;
  font-size: 12.25px;
}
.reduce {
  display: flex;
  align-items: center;
  gap: 5px;
  box-sizing: border-box;
  height: 18px;
  padding: 0 0 0 2px;
  border: 1px solid #e0e0e0;
}
.reduce .ic {
  width: 13px;
  height: 14px;
}
.memory {
  display: flex;
  align-items: center;
  box-sizing: border-box;
  width: 149px;
  height: 24px;
  margin-left: 4px;
  padding: 1px;
  background: #fff;
  border: 1px solid #b8bcc8;
  border-radius: 1px;
}
.mem-fill {
  flex: none;
  width: 5px;
  height: 100%;
  background: #5b9ee6;
}
.mem-label {
  flex: 1;
  padding-right: 6px;
  text-align: center;
  color: #a7c8f0;
}
```
